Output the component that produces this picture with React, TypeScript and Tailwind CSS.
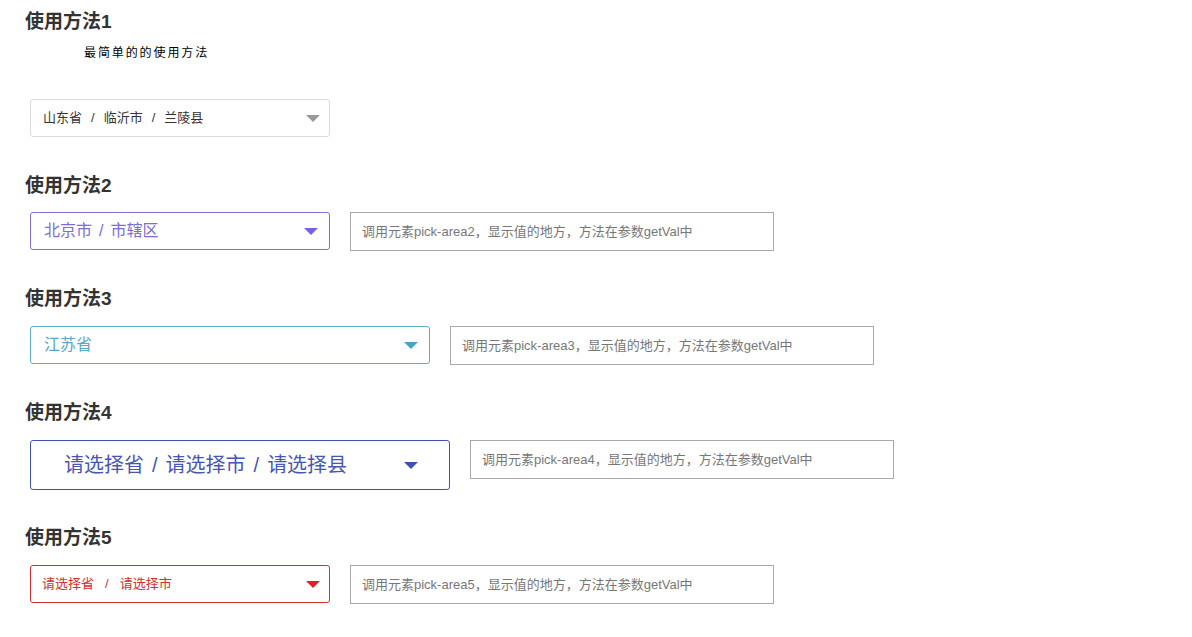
import React from "react";

type PickProps = {
  parts: string[];
  sep: string;
  width: string;
  height: string;
  border: string;
  textColor: string;
  arrowColor: string;
  textSize: string;
  padLeft: string;
  arrowRight: string;
};

function Arrow({ color }: { color: string }) {
  return (
    <span
      className={`block h-0 w-0 border-x-[7px] border-t-[7px] border-x-transparent ${color}`}
    />
  );
}

function PickArea(p: PickProps) {
  return (
    <div
      className={`flex shrink-0 items-center justify-between rounded-[3px] border bg-white ${p.width} ${p.height} ${p.border} ${p.padLeft} ${p.arrowRight}`}
    >
      <span className={`flex items-center whitespace-pre ${p.textSize} ${p.textColor}`}>
        {p.parts.map((t, i) => (
          <React.Fragment key={i}>
            {i > 0 && <span className={p.sep}>/</span>}
            <span>{t}</span>
          </React.Fragment>
        ))}
      </span>
      <Arrow color={p.arrowColor} />
    </div>
  );
}

function ValueInput({ n }: { n: number }) {
  return (
    <div className="flex h-[39px] w-[424px] shrink-0 items-center border border-[#a9a9a9] bg-white pl-[11px] text-[13px] text-[#777]">
      调用元素pick-area{n}，显示值的地方，方法在参数getVal中
    </div>
  );
}

function Heading({ children, className = "" }: { children: React.ReactNode; className?: string }) {
  return (
    <h3 className={`text-[19px] font-bold leading-[24px] text-[#333] ${className}`}>{children}</h3>
  );
}

export default function App() {
  return (
    <div
      className="min-h-[637px] bg-white pl-[25px] pt-[10px]"
      style={{ fontFamily: '"Liberation Sans", "Noto Sans CJK SC", sans-serif' }}
    >
      {/* 使用方法1 */}
      <Heading>使用方法1</Heading>
      <p className="mt-[10px] ml-[59px] text-[12px] leading-[18px] tracking-[1.9px] text-black">
        最简单的的使用方法
      </p>
      <div className="ml-[5px] mt-[37px]">
        <PickArea
          parts={["山东省", "临沂市", "兰陵县"]}
          sep="mx-[9px]"
          width="w-[300px]"
          height="h-[38px]"
          border="border-[#dcdcdc]"
          textColor="text-[#333]"
          arrowColor="border-t-[#999]"
          textSize="text-[13px]"
          padLeft="pl-[12px]"
          arrowRight="pr-[9px]"
        />
      </div>

      {/* 使用方法2 */}
      <Heading className="mt-[37px]">使用方法2</Heading>
      <div className="ml-[5px] mt-[14px] flex items-start gap-[20px]">
        <PickArea
          parts={["北京市", "市辖区"]}
          sep="mx-[7px]"
          width="w-[300px]"
          height="h-[38px]"
          border="border-[#7f6fd8]"
          textColor="text-[#7b6ed6]"
          arrowColor="border-t-[#7a5ee6]"
          textSize="text-[16px]"
          padLeft="pl-[13px]"
          arrowRight="pr-[11px]"
        />
        <ValueInput n={2} />
      </div>

      {/* 使用方法3 */}
      <Heading className="mt-[36px]">使用方法3</Heading>
      <div className="ml-[5px] mt-[15px] flex items-start gap-[20px]">
        <PickArea
          parts={["江苏省"]}
          sep="mx-[7px]"
          width="w-[400px]"
          height="h-[38px]"
          border="border-[#5cafc4]"
          textColor="text-[#58a9bf]"
          arrowColor="border-t-[#45a6c4]"
          textSize="text-[16px]"
          padLeft="pl-[13px]"
          arrowRight="pr-[11px]"
        />
        <ValueInput n={3} />
      </div>

      {/* 使用方法4 */}
      <Heading className="mt-[36px]">使用方法4</Heading>
      <div className="ml-[5px] mt-[15px] flex items-start gap-[20px]">
        <PickArea
          parts={["请选择省", "请选择市", "请选择县"]}
          sep="mx-[8px]"
          width="w-[420px]"
          height="h-[50px]"
          border="border-[#3f51b5]"
          textColor="text-[#4656b4]"
          arrowColor="border-t-[#3f51b5]"
          textSize="text-[20px]"
          padLeft="pl-[33px]"
          arrowRight="pr-[31px]"
        />
        <ValueInput n={4} />
      </div>

      {/* 使用方法5 */}
      <Heading className="mt-[36px]">使用方法5</Heading>
      <div className="ml-[5px] mt-[15px] flex items-start gap-[20px]">
        <PickArea
          parts={["请选择省", "请选择市"]}
          sep="mx-[11px]"
          width="w-[300px]"
          height="h-[38px]"
          border="border-[#d32f2f]"
          textColor="text-[#d32f2f]"
          arrowColor="border-t-[#e0211f]"
          textSize="text-[13px]"
          padLeft="pl-[11px]"
          arrowRight="pr-[9px]"
        />
        <ValueInput n={5} />
      </div>
    </div>
  );
}
